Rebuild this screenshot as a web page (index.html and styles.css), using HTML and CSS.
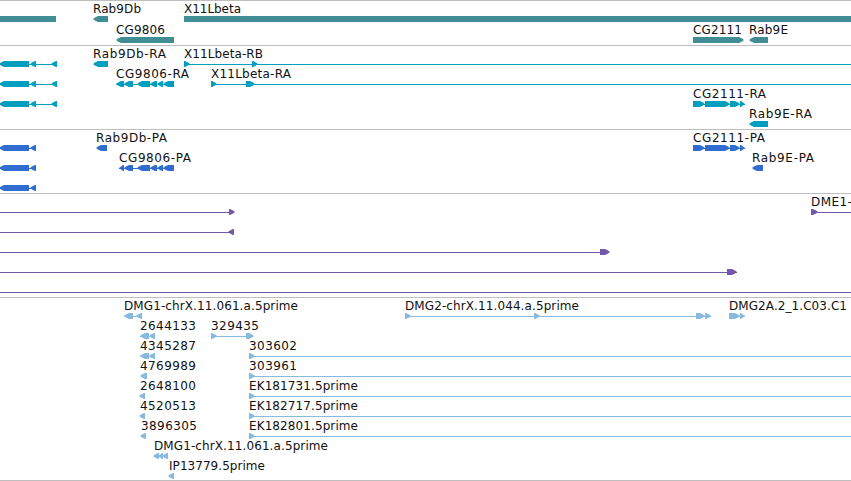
FILE: index.html
```html
<!DOCTYPE html>
<html lang="en">
<head>
    <meta charset="UTF-8">
    <title>Genome tracks</title>
    <link rel="stylesheet" href="styles.css">
</head>
<body>
    <main class="browser" id="browser"></main>
    <script src="tracks.js"></script>
</body>
</html>
```
FILE: styles.css
```css
body {
    margin: 0;
    background-color: #fff;
    overflow: hidden;
}
.browser {
    display: flex;
    flex-direction: column;
    width: 851px;
    height: 480px;
    border-bottom: 1px solid #bebebe;
}
.track {
    box-sizing: border-box;
    border-top: 1px solid #bebebe;
    overflow: hidden;
}
.track svg {
    display: block;
    width: 100%;
    height: 100%;
}
.track text {
    font-family: "DejaVu Sans", sans-serif;
    font-size: 12px;
    fill: #111;
}
.gene {
    height: 45px;
    fill: #408d95;
}
.transcript {
    height: 84px;
    fill: #009ebf;
}
.cds {
    height: 64px;
    fill: #306dce;
}
.insertion {
    height: 104px;
    fill: #7358a8;
}
.est {
    height: 183px;
    fill: #87bade;
}
```
FILE: tracks.js
```javascript
// feature: row, parts [from, to, direction], optional line [from, to], optional label [text, x, width]
const CG9806 = [[124, 133, 'L'], [137, 150, 'L'], [150, 157, 'L'], [157, 163, 'L'], [163, 174, 'L']];
const CG2111 = [[693, 705, 'R'], [705, 730, 'R'], [730, 740, 'R'], [740, 745, 'R']];
const leftRna = [[-1, 29, 'L'], [30, 36, 'L'], [51, 57, 'L']];
const leftCds = [[-1, 29, 'L'], [30, 36, 'L']];

const tracks = [
    { type: 'gene', pitch: 21, features: [
        { row: 0, parts: [[0, 56]] },
        { row: 0, parts: [[93, 108, 'L']], label: ['Rab9Db', 93, 48] },
        { row: 0, parts: [[184, 851]], label: ['X11Lbeta', 184, 57] },
        { row: 1, parts: [[116, 174, 'L']], label: ['CG9806', 116, 49] },
        { row: 1, parts: [[693, 744, 'R']], label: ['CG2111', 693, 49] },
        { row: 1, parts: [[749, 768, 'L']], label: ['Rab9E', 749, 39] }
    ] },
    { type: 'transcript', pitch: 20, features: [
        { row: 0, line: [0, 57], parts: leftRna },
        { row: 0, parts: [[93, 108, 'L']], label: ['Rab9Db-RA', 93, 73] },
        { row: 0, line: [184, 851], parts: [[184, 190, 'R'], [252, 258, 'R']], label: ['X11Lbeta-RB', 184, 79] },
        { row: 1, line: [0, 57], parts: leftRna },
        { row: 1, line: [116, 174], parts: [[116, 124, 'L'], ...CG9806], label: ['CG9806-RA', 116, 73] },
        { row: 1, line: [211, 851], parts: [[211, 217, 'R'], [246, 255, 'R']], label: ['X11Lbeta-RA', 211, 80] },
        { row: 2, line: [0, 57], parts: leftRna },
        { row: 2, line: [693, 745], parts: CG2111, label: ['CG2111-RA', 693, 73] },
        { row: 3, parts: [[749, 768, 'L']], label: ['Rab9E-RA', 749, 63] }
    ] },
    { type: 'cds', pitch: 20, features: [
        { row: 0, line: [0, 36], parts: leftCds },
        { row: 0, parts: [[96, 107, 'L']], label: ['Rab9Db-PA', 96, 71] },
        { row: 0, line: [693, 745], parts: CG2111, label: ['CG2111-PA', 693, 72] },
        { row: 1, line: [0, 36], parts: leftCds },
        { row: 1, line: [119, 174], parts: [[119, 124, 'L'], ...CG9806], label: ['CG9806-PA', 119, 72] },
        { row: 1, parts: [[752, 763, 'L']], label: ['Rab9E-PA', 752, 62] },
        { row: 2, line: [0, 36], parts: leftCds }
    ] },
    { type: 'insertion', pitch: 20, features: [
        { row: 0, line: [0, 234], parts: [[229, 235, 'R']] },
        { row: 0, line: [811, 851], parts: [[811, 818, 'R']], label: ['DME1-', 811, 41] },
        { row: 1, line: [0, 234], parts: [[228, 234, 'L']] },
        { row: 2, line: [0, 609], parts: [[600, 610, 'R']] },
        { row: 3, line: [0, 737], parts: [[727, 737, 'R']] },
        { row: 4, line: [0, 851], parts: [] }
    ] },
    { type: 'est', pitch: 20, features: [
        { row: 0, line: [124, 142], parts: [[124, 133, 'L'], [136, 142, 'L']], label: ['DMG1-chrX.11.061.a.5prime', 124, 174] },
        { row: 0, line: [405, 711], parts: [[405, 411, 'R'], [534, 540, 'R'], [696, 705, 'R'], [705, 711, 'R']], label: ['DMG2-chrX.11.044.a.5prime', 405, 174] },
        { row: 0, line: [729, 745], parts: [[729, 740, 'R'], [740, 745, 'R']], label: ['DMG2A.2_1.C03.C1', 729, 118] },
        { row: 1, line: [140, 155], parts: [[140, 149, 'L'], [149, 155, 'L']], label: ['2644133', 140, 56] },
        { row: 1, line: [211, 253], parts: [[211, 217, 'R'], [246, 254, 'R']], label: ['329435', 211, 48] },
        { row: 2, line: [140, 155], parts: [[140, 149, 'L'], [149, 155, 'L']], label: ['4345287', 140, 56] },
        { row: 2, line: [249, 851], parts: [[249, 255, 'R']], label: ['303602', 249, 48] },
        { row: 3, parts: [[140, 147, 'L']], label: ['4769989', 140, 56] },
        { row: 3, line: [249, 851], parts: [[249, 255, 'R']], label: ['303961', 249, 48] },
        { row: 4, parts: [[139, 145, 'L']], label: ['2648100', 140, 56] },
        { row: 4, line: [249, 851], parts: [[249, 255, 'R']], label: ['EK181731.5prime', 249, 109] },
        { row: 5, parts: [[139, 145, 'L']], label: ['4520513', 140, 56] },
        { row: 5, line: [249, 851], parts: [[249, 255, 'R']], label: ['EK182717.5prime', 249, 109] },
        { row: 6, parts: [[140, 146, 'L']], label: ['3896305', 141, 56] },
        { row: 6, line: [249, 851], parts: [[249, 255, 'R']], label: ['EK182801.5prime', 249, 109] },
        { row: 7, line: [154, 168], parts: [[153, 159, 'L'], [158, 163, 'L'], [162, 168, 'L']], label: ['DMG1-chrX.11.061.a.5prime', 154, 174] },
        { row: 8, parts: [[168, 174, 'L']], label: ['IP13779.5prime', 169, 96] }
    ] }
];

function drawPart(part, y) {
    const [from, to, direction] = part;
    const head = Math.min(6, to - from);
    if (direction === 'L') {
        return `<path d="M${to} ${y}H${from + head - 1}L${from + 2} ${y + 1.5}L${from} ${y + 3}L${from + 2} ${y + 4.5}L${from + head - 1} ${y + 6}H${to}Z"/>`;
    }
    if (direction === 'R') {
        return `<path d="M${from} ${y}H${to - head + 1}L${to - 2} ${y + 1.5}L${to} ${y + 3}L${to - 2} ${y + 4.5}L${to - head + 1} ${y + 6}H${from}Z"/>`;
    }
    return `<path d="M${from} ${y}H${to}V${y + 6}H${from}Z"/>`;
}

document.getElementById('browser').innerHTML = tracks.map(track => {
    const shapes = track.features.map(feature => {
        const y = 15 + feature.row * track.pitch;
        let out = '';
        if (feature.line) {
            out += `<rect x="${feature.line[0]}" y="${y + 3}" width="${feature.line[1] - feature.line[0]}" height="1"/>`;
        }
        out += feature.parts.map(part => drawPart(part, y)).join('');
        if (feature.label) {
            const [text, x, width] = feature.label;
            out += `<text x="${x}" y="${y - 3}" textLength="${width}">${text}</text>`;
        }
        return out;
    }).join('');
    return `<section class="track ${track.type}"><svg>${shapes}</svg></section>`;
}).join('');
```
